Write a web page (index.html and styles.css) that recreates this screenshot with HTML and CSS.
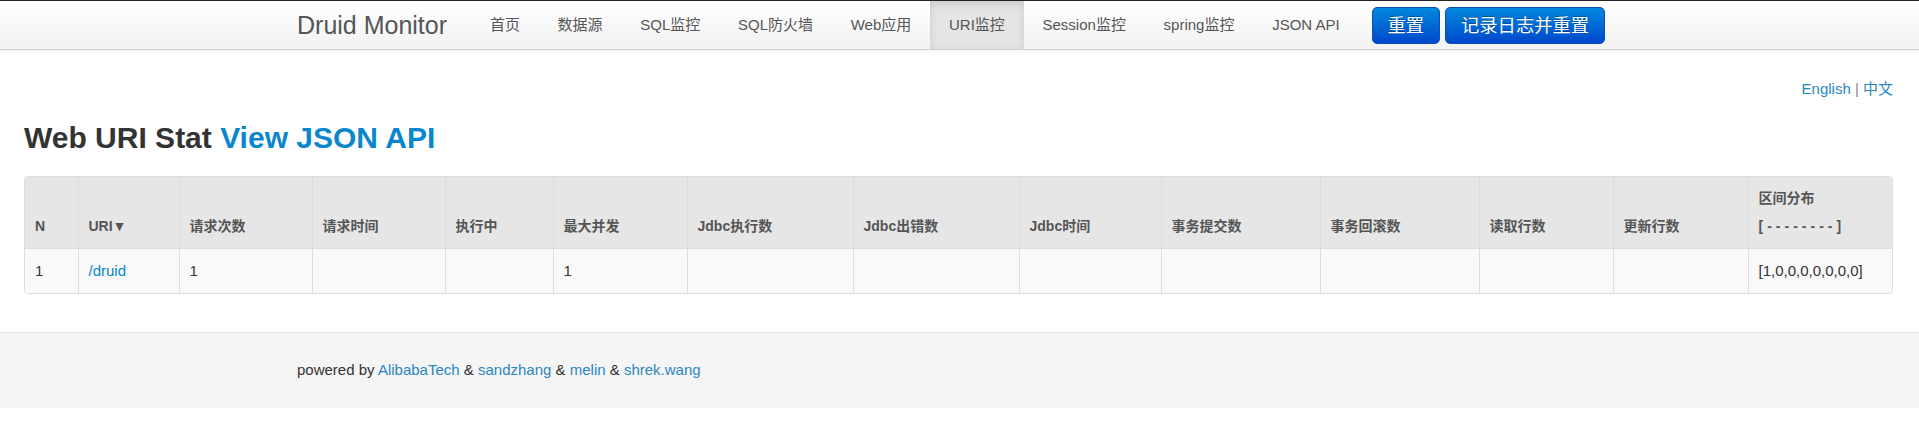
FILE: index.html
```html
<!DOCTYPE html>
<html lang="zh">
<head>
<meta charset="utf-8">
<title>Druid Monitor</title>
<link rel="stylesheet" href="styles.css">
</head>
<body>
<header class="navbar">
  <div class="container nav-inner">
    <a class="brand" href="#">Druid Monitor</a>
    <nav class="nav">
      <a href="#">首页</a>
      <a href="#">数据源</a>
      <a href="#">SQL监控</a>
      <a href="#">SQL防火墙</a>
      <a href="#">Web应用</a>
      <a href="#" class="active">URI监控</a>
      <a href="#">Session监控</a>
      <a href="#">spring监控</a>
      <a href="#">JSON API</a>
    </nav>
    <div class="actions">
      <button class="btn">重置</button>
      <button class="btn">记录日志并重置</button>
    </div>
  </div>
</header>

<main class="main">
  <div class="lang"><a href="#">English</a> <span class="sep">|</span> <a href="#">中文</a></div>
  <h2 class="title">Web URI Stat <a href="#">View JSON API</a></h2>

  <div class="table-wrap">
    <table class="stat">
      <colgroup>
        <col class="w53"><col class="w101"><col class="w133"><col class="w133"><col class="w108"><col class="w134"><col class="w166"><col class="w166"><col class="w142"><col class="w159"><col class="w159"><col class="w134"><col class="w135"><col class="w146">
      </colgroup>
      <thead>
        <tr>
          <th>N</th>
          <th>URI▼</th>
          <th>请求次数</th>
          <th>请求时间</th>
          <th>执行中</th>
          <th>最大并发</th>
          <th>Jdbc执行数</th>
          <th>Jdbc出错数</th>
          <th>Jdbc时间</th>
          <th>事务提交数</th>
          <th>事务回滚数</th>
          <th>读取行数</th>
          <th>更新行数</th>
          <th>区间分布<br><span class="dash">[--------]</span></th>
        </tr>
      </thead>
      <tbody>
        <tr>
          <td>1</td>
          <td><a href="#">/druid</a></td>
          <td>1</td>
          <td></td>
          <td></td>
          <td>1</td>
          <td></td>
          <td></td>
          <td></td>
          <td></td>
          <td></td>
          <td></td>
          <td></td>
          <td>[1,0,0,0,0,0,0,0]</td>
        </tr>
      </tbody>
    </table>
  </div>
</main>

<footer class="footer">
  <div class="container">
    powered by <a href="#">AlibabaTech</a> &amp; <a href="#">sandzhang</a> &amp; <a href="#">melin</a> &amp; <a href="#">shrek.wang</a>
  </div>
</footer>
</body>
</html>
```

FILE: styles.css
```css
* { box-sizing: border-box; }

body {
  margin: 0;
  font-family: "Liberation Sans", Arial, "Noto Sans CJK SC", sans-serif;
  font-size: 15px;
  line-height: 20px;
  color: #333;
  background: #fff;
}

a { color: #0088cc; text-decoration: none; }

.container {
  width: 1325px;
  margin: 0 auto;
}

/* navbar */
.navbar {
  border-top: 1px solid #222;
  background: linear-gradient(to bottom, #ffffff, #f2f2f2);
  border-bottom: 1px solid #d4d4d4;
  box-shadow: 0 1px 4px rgba(0, 0, 0, 0.065);
}

.nav-inner {
  display: flex;
  align-items: stretch;
  height: 48px;
}

.brand {
  display: flex;
  align-items: center;
  font-size: 25px;
  color: #555;
  margin-right: 24px;
}

.nav {
  display: flex;
  align-items: stretch;
}

.nav a {
  display: flex;
  align-items: center;
  padding: 0 18.85px;
  color: #555;
  font-size: 15px;
}

.nav a.active {
  background: #e5e5e5;
  box-shadow: inset 0 3px 8px rgba(0, 0, 0, 0.125);
}

.actions {
  display: flex;
  align-items: center;
  gap: 5px;
  margin-left: 13px;
}

.btn {
  font-family: "Liberation Sans", Arial, "Noto Sans CJK SC", sans-serif;
  font-size: 18.3px;
  line-height: 24px;
  padding: 6px 15px;
  height: 37px;
  color: #fff;
  background: linear-gradient(to bottom, #0088dd, #0048cc);
  border: 1px solid #0a4fb8;
  border-radius: 5px;
  text-shadow: 0 -1px 0 rgba(0, 0, 0, 0.25);
  cursor: pointer;
}

/* main */
.main {
  padding: 0 26px 0 24px;
}

.lang {
  text-align: right;
  margin-top: 29px;
  font-size: 15px;
}

.lang a { color: #2a87c0; }
.lang .sep { color: #888; }

.title {
  margin: 21px 0 20px;
  font-size: 30px;
  line-height: 36px;
  font-weight: bold;
  color: #333;
}

.title a { color: #0a87cc; }

.table-wrap {
  border: 1px solid #ddd;
  border-radius: 4px;
  overflow: hidden;
}

.stat {
  width: 100%;
  border-collapse: collapse;
  table-layout: fixed;
}

.w53 { width: 53px; }
.w101 { width: 101px; }
.w108 { width: 108px; }
.w133 { width: 133px; }
.w134 { width: 134px; }
.w135 { width: 135px; }
.w142 { width: 142px; }
.w146 { width: 146px; }
.w159 { width: 159px; }
.w166 { width: 166px; }

.stat th,
.stat td {
  text-align: left;
  border-left: 1px solid #ddd;
  padding: 8px 10px;
  line-height: 28px;
}

.stat th:first-child,
.stat td:first-child { border-left: 0; }

.stat th {
  background: #e6e6e6;
  color: #555;
  font-size: 14px;
  font-weight: bold;
  vertical-align: bottom;
  padding-top: 7px;
}

.stat td {
  background: #f9f9f9;
  border-top: 1px solid #ddd;
  font-size: 15px;
  color: #333;
}

.dash { letter-spacing: 4px; }

/* footer */
.footer {
  margin-top: 38px;
  padding: 27px 0 28px;
  background: #f5f5f5;
  border-top: 1px solid #e5e5e5;
  font-size: 15px;
  color: #333;
}

.footer a { color: #2a87c0; }
```
